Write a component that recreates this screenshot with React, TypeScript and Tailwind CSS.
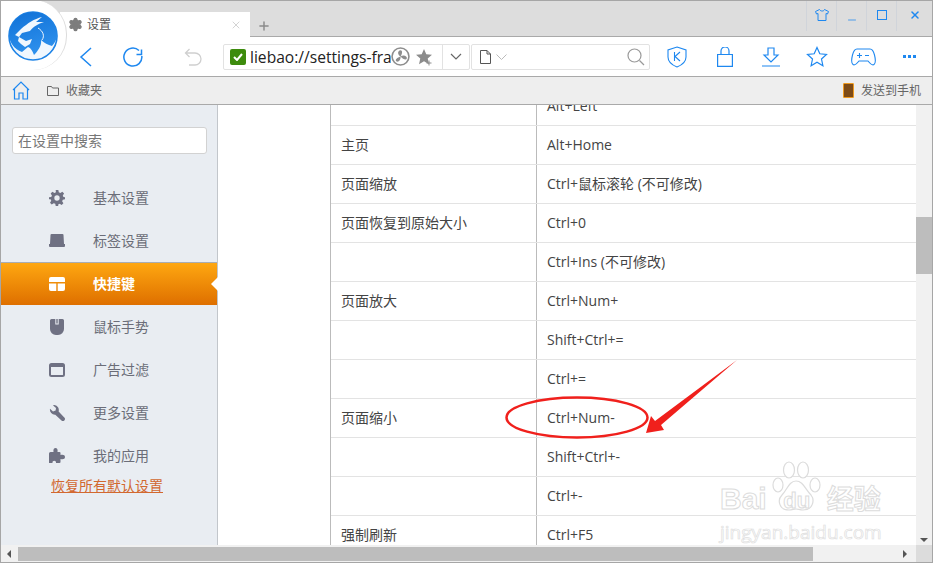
import React from "react";
import { Settings, X, Plus, Minus } from "lucide-react";

const FONT = "[font-family:'Open_Sans','Noto_Sans_CJK_SC',sans-serif]";

const rows: [string, string][] = [
  ["", "Alt+Left"],
  ["主页", "Alt+Home"],
  ["页面缩放", "Ctrl+鼠标滚轮 (不可修改)"],
  ["页面恢复到原始大小", "Ctrl+0"],
  ["", "Ctrl+Ins (不可修改)"],
  ["页面放大", "Ctrl+Num+"],
  ["", "Shift+Ctrl+="],
  ["", "Ctrl+="],
  ["页面缩小", "Ctrl+Num-"],
  ["", "Shift+Ctrl+-"],
  ["", "Ctrl+-"],
  ["强制刷新", "Ctrl+F5"],
];

const G = "#6f7183";
const navIcons: Record<string, React.ReactNode> = {
  gear: (
    <svg width="16" height="16" viewBox="0 0 24 24" fill={G} className="block">
      <path fillRule="evenodd" d="M10 0h4l.7 3.4 2.3 1 3-1.9 2.6 2.6-1.9 3 1 2.3L24 11v3l-3.3.7-1 2.3 1.9 3-2.6 2.6-3-1.9-2.3 1L13.9 24h-3.8l-.7-3.3-2.3-1-3 1.9-2.6-2.6 1.9-3-1-2.3L0 14v-3l3.4-.6 1-2.3-1.9-3 2.6-2.6 3 1.9 2.3-1zM12 8a4 4 0 100 8 4 4 0 000-8z" />
    </svg>
  ),
  tab: (
    <svg width="16" height="13" viewBox="0 0 16 13" fill={G} className="block">
      <path d="M2.5 0h11a1 1 0 011 1l.5 9h1v2a1 1 0 01-1 1H1a1 1 0 01-1-1v-2h1l.5-9a1 1 0 011-1z" />
    </svg>
  ),
  key: (
    <svg width="16" height="14" viewBox="0 0 16 14" fill="#fff" className="block">
      <path d="M2 0h12a2 2 0 012 2v3H0V2a2 2 0 012-2zM0 6.500h7.300V14H2a2 2 0 01-2-2zM8.700 6.500H16V12a2 2 0 01-2 2H8.700z" />
    </svg>
  ),
  mouse: (
    <svg width="14" height="16" viewBox="0 0 14 16" fill={G} className="block">
      <path d="M1.500 0h3.800v5.500h3.400V0h3.800A1.500 1.500 0 0114 1.500V10a6 6 0 01-6 6H6a6 6 0 01-6-6V1.500A1.500 1.500 0 011.500 0z" />
      <path d="M6.300 0h1.400v4.500H6.300z" />
    </svg>
  ),
  win: (
    <svg width="16" height="14" viewBox="0 0 16 14" className="block">
      <rect x="1" y="1" width="14" height="12" rx="1.500" fill="none" stroke={G} strokeWidth="2" />
      <rect x="1" y="1" width="14" height="3" fill={G} />
    </svg>
  ),
  wrench: (
    <svg width="16" height="16" viewBox="0 0 16 16" fill={G} className="block">
      <path d="M5.500 0a5 5 0 00-1.600.3L7 3 6.600 5.600 4 6.500 1 3.800A5 5 0 006.300 9.700l6.200 5.800a2 2 0 002.800-2.900L9.600 6.400A5 5 0 005.500 0z" />
    </svg>
  ),
  puzzle: (
    <svg width="16" height="15" viewBox="0 0 16 15" fill={G} className="block">
      <path d="M0 15V5.500A1.500 1.500 0 011.500 4H4.500C4 1.500 5 0 6.500 0S9 1.500 8.500 4h2a1 1 0 011 1v2c2.500-.7 4.500 0 4.500 2s-2 2.700-4.500 2v3a1 1 0 01-1 1H7c.5-3-4-3-3.500 0z" />
    </svg>
  ),
};

const nav: [string, string, boolean?][] = [
  ["gear", "基本设置"],
  ["tab", "标签设置"],
  ["key", "快捷键", true],
  ["mouse", "鼠标手势"],
  ["win", "广告过滤"],
  ["wrench", "更多设置"],
  ["puzzle", "我的应用"],
];

const B = "#1e88f0";

function Logo() {
  return (
    <svg width="50" height="50" viewBox="0 0 50 50" className="block">
      <defs>
        <linearGradient id="lg" x1="0.3" y1="0" x2="0.6" y2="1">
          <stop offset="0" stopColor="#1273d8" />
          <stop offset="1" stopColor="#2f92ee" />
        </linearGradient>
      </defs>
      <circle cx="25" cy="25" r="24" fill="#f0f7fe" stroke="#1d83e6" strokeWidth="1.600" />
      <path d="M1 25A24 24 0 0149 25C48.500 29 46.500 32 44 35 40 34 36 32 33 29 34 34 30 40 26 44 24.500 40 23 37 20 36L14 41C6 38 2 32 1 25z" fill="url(#lg)" />
      <path d="M7 24L13 18C20 12 26 8 34 6L28 11 36 11C30 13 26 15 22 20L14 22 11 26z" fill="#f0f7fe" />
      <path d="M11 26L18 30 24 28 22 33 17 36 13 33 10 30z" fill="#f0f7fe" />
      <path d="M30 17C35 20 37 25 34 29" fill="none" stroke="#f0f7fe" strokeWidth="1" />
    </svg>
  );
}

function Toolbar() {
  const s = { fill: "none", stroke: B, strokeWidth: 1.5 } as const;
  return (
    <div className="flex h-[40px] items-center border-b border-[#a9a9a9] bg-white">
      <div className="flex w-[222px] shrink-0 items-center">
        <svg width="14" height="22" viewBox="0 0 14 22" className="ml-[78px]" {...s}>
          <path d="M12 2L2 11l10 9" />
        </svg>
        <svg width="20" height="20" viewBox="0 0 20 20" className="ml-[30px]" {...s}>
          <path d="M16 3.500A9 9 0 1018.800 9M18.500 2.500v5h-5" />
        </svg>
        <svg width="18" height="18" viewBox="0 0 18 18" className="ml-[41px]" fill="none" stroke="#cfcfcf" strokeWidth="1.300">
          <path d="M5.500 1L1.500 5l4 4M1.500 5H11a5.500 5.500 0 010 12H5" />
        </svg>
      </div>
      <div className="flex h-[26px] w-[247px] shrink-0 items-center rounded-[2px] border border-[#e2e2e2]">
        <span className="ml-[6px] flex h-[16px] w-[16px] shrink-0 items-center justify-center rounded-[2px] bg-[#3d8b0d]">
          <svg width="10" height="8" viewBox="0 0 10 8" fill="none" stroke="#fff" strokeWidth="2"><path d="M1 4l3 3 5-6" /></svg>
        </span>
        <span className="ml-[4px] w-[141px] shrink-0 overflow-hidden whitespace-nowrap text-[15.6px] leading-[24px] text-[#222]">liebao://settings-fra</span>
        <svg width="19" height="19" viewBox="0 0 18 18" className="shrink-0" fill="none" stroke="#8d8d8d" strokeWidth="1.500">
          <circle cx="9" cy="9" r="8" />
          <path d="M9 9C6 7 6 3.500 9 3c2 0 2 3 0 6zM9 9c3-2 6.500-.5 6 2-.5 1.500-3.500 1-6-2zM9 9c.5 3-2 6-4 4.500C3.500 12 6 10 9 9z" fill="#8d8d8d" stroke="none" />
        </svg>
        <svg width="18" height="18" viewBox="0 0 18 18" className="ml-[6px] shrink-0">
          <path d="M8 1l2.300 5.300 5.700.5-4.300 3.800 1.300 5.600L8 13.300 3 16.200l1.300-5.600L0 6.800l5.700-.5z" fill="#8c8c8c" />
          <path d="M13 12.500v5M10.500 15h5" stroke="#8c8c8c" fill="none" />
        </svg>
        <div className="ml-[8px] flex h-full flex-1 items-center justify-center border-l border-[#e2e2e2]">
          <svg width="12" height="7" viewBox="0 0 12 7" fill="none" stroke="#666" strokeWidth="1.200"><path d="M1 1l5 5 5-5" /></svg>
        </div>
      </div>
      <div className="ml-px flex h-[26px] w-[179px] shrink-0 items-center rounded-[2px] border border-[#e2e2e2]">
        <svg width="11" height="14" viewBox="0 0 11 14" className="ml-[8px]" fill="none" stroke="#555"><path d="M.5.500h6.500l3.500 3.500v9.500H.5zM7 .500V4h3.500" /></svg>
        <svg width="11" height="6" viewBox="0 0 11 6" className="ml-[5px]" fill="none" stroke="#bbb"><path d="M.5.500l5 5 5-5" /></svg>
        <svg width="18" height="18" viewBox="0 0 18 18" className="ml-auto mr-[4px]" fill="none" stroke="#9a9a9a" strokeWidth="1.200">
          <circle cx="7.500" cy="7.500" r="6.500" /><path d="M12.500 12.500L17 17" />
        </svg>
      </div>
      <svg width="20" height="22" viewBox="0 0 20 22" className="ml-[17px] shrink-0" fill="none" stroke={B} strokeWidth="1.100">
        <path d="M10 1l9 3v7c0 5-4 8-9 10-5-2-9-5-9-10V4z" />
        <path d="M7.500 6v9M13 6l-5 4.500L13 15" />
      </svg>
      <svg width="16" height="20" viewBox="0 0 16 20" className="ml-[30px] shrink-0" fill="none" stroke={B} strokeWidth="1.200">
        <path d="M.6 7.500h14.800v11.900H.6zM4 7.500V4a4 4 0 018 0v3.500" />
      </svg>
      <svg width="18" height="20" viewBox="0 0 18 20" className="ml-[29px] shrink-0" fill="none" stroke={B} strokeWidth="1.200">
        <path d="M6 1h6v7h4l-7 7-7-7h4zM0 19h18" />
      </svg>
      <svg width="22" height="21" viewBox="0 0 22 21" className="ml-[26px] shrink-0" fill="none" stroke={B} strokeWidth="1.200">
        <path d="M11 1.500l2.800 6.300 6.700.7-5 4.500 1.400 6.700L11 16.300 5.100 19.700l1.400-6.700-5-4.500 6.700-.7z" />
      </svg>
      <svg width="25" height="18" viewBox="0 0 25 18" className="ml-[23px] shrink-0" fill="none" stroke={B} strokeWidth="1.100">
        <path d="M6 1h13c2.500 0 3.500 2 4.500 6s1.500 8-.5 9.500-4-1-6-3.500H8c-2 2.500-4 5-6 3.500S.5 11 1.500 7 3.500 1 6 1z" />
        <path d="M6 7.500h5M8.500 5v5M14 7.500h4" />
      </svg>
      <div className="ml-[27px] flex shrink-0 gap-[2px]">
        <span className="h-[3px] w-[3px] bg-[#1e88f0]" />
        <span className="h-[3px] w-[3px] bg-[#1e88f0]" />
        <span className="h-[3px] w-[3px] bg-[#1e88f0]" />
      </div>
    </div>
  );
}

export default function App() {
  return (
    <div className={`relative flex h-[563px] w-[933px] flex-col overflow-hidden border border-[#a6a6a6] bg-white ${FONT}`}>
      {/* title bar */}
      <div className="flex h-[36px] shrink-0 items-end border-b border-[#a9a9a9] bg-[#dddddd]">
        <div className="relative top-px ml-[59px] flex h-[25px] w-[190px] items-center bg-white pl-[8px]">
          <Settings size={15} fill="#7d7d7d" stroke="#7d7d7d" strokeWidth={2} />
          <span className="ml-[4px] text-[12px] text-[#555]">设置</span>
          <X size={12} className="ml-auto mr-[8px]" stroke="#c4c4c4" strokeWidth={1.5} />
        </div>
        <Plus size={14} stroke="#8a8a8a" strokeWidth={2.5} className="mb-[3px] ml-[7px]" />
        <div className="mb-[5px] ml-auto mr-[6px] flex h-[30px] self-start">
          {[0, 1, 2, 3].map((i) => (
            <div key={i} className={`flex items-center justify-center border-l border-[#d0d4da] pb-[2px] ${i === 3 ? "w-[30px] pl-[6px]" : "w-[30px]"}`}>
              {i === 0 && (
                <svg width="14" height="12" viewBox="0 0 14 12" fill="none" stroke={B}>
                  <path d="M4.500.500L.5 2.500l1 2.500 1.500-.5v7h8v-7l1.500.5 1-2.500-4-2c-.5 2-4 2-5 0z" />
                </svg>
              )}
              {i === 1 && <Minus size={12} stroke={B} strokeWidth={1.5} className="mt-[9px] w-[14px]" />}
              {i === 2 && <span className="h-[10px] w-[10px] border border-[#1e88f0]" />}
              {i === 3 && <X size={12} stroke={B} strokeWidth={3} />}
            </div>
          ))}
        </div>
      </div>

      <Toolbar />

      {/* bookmarks */}
      <div className="flex h-[28px] shrink-0 items-center border-b border-[#a9a9a9] bg-[#eeeeee]">
        <svg width="18" height="19" viewBox="0 0 18 19" className="ml-[11px]" fill="none" stroke={B} strokeWidth="1.200">
          <path d="M1 9l8-8 8 8M2.500 8v10h4.500v-6h4v6h4.500V8" />
        </svg>
        <svg width="12" height="10" viewBox="0 0 12 10" className="ml-[17px]" fill="none" stroke="#666">
          <path d="M.5 9.500V.5h4l1 1.500h6v7.500z" />
        </svg>
        <span className="ml-[7px] text-[12px] text-[#666]">收藏夹</span>
        <div className="ml-auto mr-[11px] flex items-center">
          <span className="relative block h-[15px] w-[11px] rounded-[1px] bg-[#7d4b17] [border:1px_solid_#ef9a1e] [border-bottom-width:3px]" />
          <span className="ml-[7px] text-[12px] text-[#666]">发送到手机</span>
        </div>
      </div>

      {/* body */}
      <div className="flex min-h-0 flex-1">
        <aside className="relative flex w-[217px] shrink-0 flex-col border-r border-[#c2c6cb] bg-[#e9edf2]">
          <div className="ml-[11px] mt-[22px] flex h-[27px] w-[195px] items-center rounded-[3px] border border-[#d2d2d2] bg-white pl-[5px] text-[14px] text-[#777]">
            在设置中搜索
          </div>
          <ul className="mt-[22px]">
            {nav.map(([ic, label, on]) => (
              <li
                key={label}
                className={`relative flex h-[43px] items-center ${on ? "border-t border-[#a9adb2] bg-gradient-to-b from-[#fea711] to-[#de6f00] pb-px font-bold text-white" : "text-[#6b6d78]"}`}
              >
                <span className="ml-[48px] flex w-[16px] justify-center">{navIcons[ic]}</span>
                <span className="ml-[28px] text-[14px]">{label}</span>
                {on && <span className="absolute right-[-1px] top-[14px] h-0 w-0 border-y-[7px] border-r-[7px] border-y-transparent border-r-white" />}
              </li>
            ))}
          </ul>
          <a className="ml-[50px] w-fit text-[14px] leading-[18px] text-[#d2682f] underline">恢复所有默认设置</a>
        </aside>

        <main className="min-w-0 flex-1 overflow-hidden bg-white">
          <div className="ml-[112px] mt-[-18px] border-l border-[#bbbbbb]">
            {rows.map(([a, b], i) => (
              <div key={i} className="flex h-[39px] items-center border-b border-[#e3e3e3] text-[14px] text-[#444]">
                <span className="w-[205px] pb-[2px] pl-[10px]">{a}</span>
                <span className="flex h-full flex-1 items-center border-l border-[#bbbbbb] pb-[2px] pl-[10px]">{b}</span>
              </div>
            ))}
          </div>
        </main>

        {/* vertical scrollbar */}
        <div className="flex w-[16px] shrink-0 flex-col items-center bg-[#f1f1f1]">
          <div className="mt-[112px] h-[57px] w-full bg-[#bdbdbd]" />
          <span className="mb-[3px] mt-auto h-0 w-0 border-x-[4px] border-t-[4px] border-x-transparent border-t-[#555]" />
        </div>
      </div>

      {/* horizontal scrollbar */}
      <div className="flex h-[17px] shrink-0 items-center bg-[#f1f1f1]">
        <span className="ml-[6px] h-0 w-0 border-y-[4px] border-r-[4px] border-y-transparent border-r-[#555]" />
        <div className="ml-[7px] h-[14px] w-[795px] bg-[#bdbdbd]" />
        <span className="ml-[90px] h-0 w-0 border-y-[4px] border-l-[4px] border-y-transparent border-l-[#555]" />
        <div className="ml-auto h-full w-[16px] bg-[#dcdcdc]" />
      </div>

      {/* logo overlay */}
      <div className="absolute left-0 top-[-1px] h-[70px] w-[66px] rounded-r-[34px] border-r border-[#dcdcdc] bg-white" />
      <div className="absolute left-[7px] top-[10px]"><Logo /></div>

      {/* annotation */}
      <svg width="933" height="563" viewBox="0 0 933 563" className="pointer-events-none absolute left-[-1px] top-[-1px]">
        <ellipse cx="577" cy="417.500" rx="70.500" ry="20" fill="none" stroke="#f0201c" strokeWidth="2.500" />
        <path d="M646 433L651 416 655 421 737 360 661 425 664 430z" fill="#f0201c" />
      </svg>

      {/* watermark */}
      <div className="pointer-events-none absolute left-[719px] top-[482px] flex flex-col">
        <div className="flex items-end text-white [-webkit-text-stroke:1px_#dcdcdc]">
          <span className="text-[30px] font-bold leading-[32px] [font-family:'Liberation_Sans',sans-serif]">Bai</span>
          <span className="relative ml-[7px] flex h-[30px] w-[46px] items-end justify-center">
            <svg width="50" height="54" viewBox="0 0 50 54" className="absolute bottom-0 left-[-2px]" fill="#fff" stroke="#dcdcdc" strokeWidth="1.200">
              <ellipse cx="6" cy="24" rx="5" ry="7" />
              <ellipse cx="17" cy="9" rx="5.500" ry="8" />
              <ellipse cx="31" cy="9" rx="5.500" ry="8" />
              <ellipse cx="43" cy="24" rx="5" ry="7" />
              <path d="M24 20c7 0 9 8 15 14 4 5 2 15-8 15-3 0-5-1-7-1s-4 1-7 1C7 49 5 39 10 34c5-5 7-14 14-14z" />
            </svg>
            <span className="relative mb-[2px] text-[22px] font-bold leading-[24px] [font-family:'Liberation_Sans',sans-serif]">du</span>
          </span>
          <span className="ml-[7px] text-[27px] font-bold leading-[32px]">经验</span>
        </div>
        <span className="mt-[5px] text-[19px] leading-[24px] text-white [-webkit-text-stroke:0.7px_#dedede]">jingyan.baidu.com</span>
      </div>
    </div>
  );
}
